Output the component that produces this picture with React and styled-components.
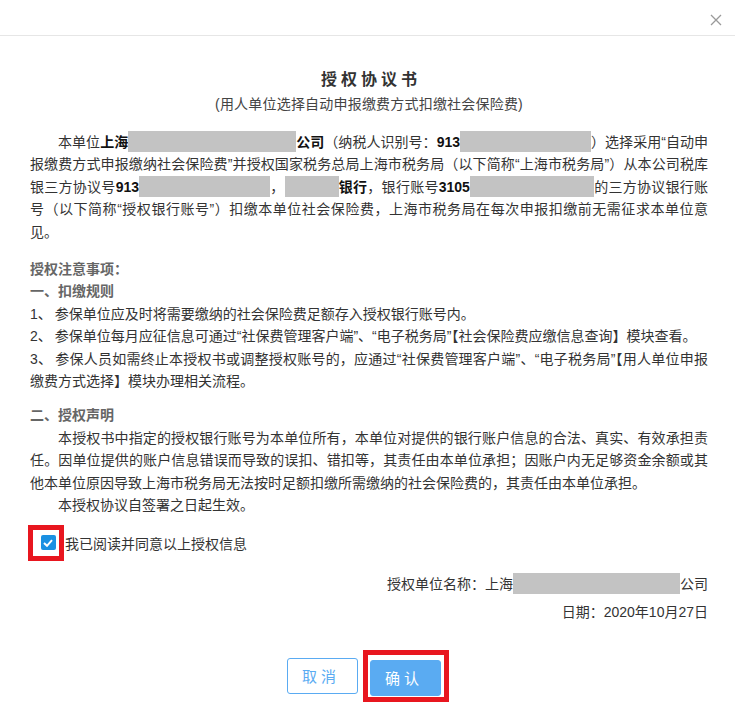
import React, { useState } from "react";
import styled, { createGlobalStyle } from "styled-components";

const GlobalStyle = createGlobalStyle`
  html, body {
    margin: 0;
    padding: 0;
    background: #fff;
  }
  body {
    font-family: "Liberation Sans", "Noto Sans CJK SC", sans-serif;
  }
`;

const Dialog = styled.div`
  width: 735px;
  height: 711px;
  background: #fff;
  display: flex;
  flex-direction: column;
  color: #333;
`;

const Header = styled.div`
  height: 36px;
  border-bottom: 1px solid #e6e6e6;
  display: flex;
  justify-content: flex-end;
  align-items: center;
  padding-right: 12px;
  box-sizing: border-box;
`;

const CloseButton = styled.button`
  border: none;
  background: none;
  padding: 0;
  width: 14px;
  height: 14px;
  display: flex;
  align-items: center;
  justify-content: center;
  cursor: pointer;
  margin-top: 4px;
`;

const Body = styled.div`
  padding: 32px 27px 0 30px;
  display: flex;
  flex-direction: column;
`;

const Title = styled.h1`
  margin: 0;
  font-size: 16px;
  font-weight: 700;
  letter-spacing: 4px;
  text-align: center;
  color: #333;
  line-height: 24px;
  padding-left: 4px;
`;

const Subtitle = styled.div`
  margin-top: 1px;
  font-size: 14px;
  text-align: center;
  color: #444;
  line-height: 22px;
  letter-spacing: 0.2px;
`;

const Paragraph = styled.p`
  margin: ${(p) => p.$mt || 0}px 0 0;
  font-size: 14px;
  line-height: 22.4px;
  text-align: justify;
  text-indent: ${(p) => (p.$indent ? "28px" : "0")};
  color: #333;
`;

const Strong = styled.b`
  color: #111;
  font-weight: 700;
`;

const Redact = styled.span`
  display: inline-block;
  width: ${(p) => p.$w}px;
  height: 21px;
  background: #c3c3c3;
  vertical-align: -5px;
  text-indent: 0;
`;

const ItemNo = styled.span`
  margin-right: 3px;
`;

const SectionTitle = styled.div`
  margin-top: ${(p) => p.$mt || 0}px;
  font-size: 14px;
  font-weight: 700;
  line-height: 22.4px;
  color: #666;
`;

const CheckRow = styled.label`
  margin-top: 14px;
  display: flex;
  align-items: center;
  height: 24px;
  font-size: 14px;
  color: #333;
  cursor: pointer;
`;

const CheckFrame = styled.span`
  margin-left: -2px;
  width: 36px;
  height: 36px;
  box-sizing: border-box;
  border: 5px solid #e8161f;
  display: flex;
  align-items: center;
  justify-content: center;
  padding-left: 4px;
  margin-right: 1px;
`;

const CheckBox = styled.span`
  width: 15px;
  height: 15px;
  border-radius: 2px;
  background: ${(p) => (p.$checked ? "#1a90e2" : "#fff")};
  border: ${(p) => (p.$checked ? "none" : "1px solid #ccc")};
  display: flex;
  align-items: center;
  justify-content: center;
`;

const SignBlock = styled.div`
  margin-top: 15px;
  display: flex;
  flex-direction: column;
  align-items: flex-end;
  font-size: 14px;
  color: #333;
`;

const SignLine = styled.div`
  line-height: 28px;
  height: 28px;
  display: flex;
  align-items: center;
`;

const Footer = styled.div`
  margin-top: 24px;
  display: flex;
  justify-content: center;
  align-items: center;
  gap: 5px;
  padding-right: 3px;
`;

const Button = styled.button`
  width: 71px;
  height: 36px;
  border-radius: 3px;
  font-size: 15px;
  letter-spacing: 4px;
  padding-left: 4px;
  font-family: "Liberation Sans", "Noto Sans CJK SC", sans-serif;
  cursor: pointer;
  border: 1px solid #5aabf2;
  background: ${(p) => (p.$primary ? "#5aabf2" : "#fff")};
  color: ${(p) => (p.$primary ? "#fff" : "#5aabf2")};
`;

const Highlight = styled.div`
  padding: 5px 3px 1px 2px;
  border: 5px solid #e8161f;
  display: flex;
`;

export default function App() {
  const [checked, setChecked] = useState(true);

  return (
    <>
      <GlobalStyle />
      <Dialog>
        <Header>
          <CloseButton aria-label="关闭">
            <svg width="12" height="12" viewBox="0 0 12 12">
              <path d="M1 1 L11 11 M11 1 L1 11" stroke="#9a9a9a" strokeWidth="1.3" />
            </svg>
          </CloseButton>
        </Header>
        <Body>
          <Title>授权协议书</Title>
          <Subtitle>(用人单位选择自动申报缴费方式扣缴社会保险费)</Subtitle>

          <Paragraph $indent $mt={16}>
            本单位<Strong>上海</Strong>
            <Redact $w={168} />
            <Strong>公司</Strong>（纳税人识别号：<Strong>913</Strong>
            <Redact $w={131} />）选择采用“自动申报缴费方式申报缴纳社会保险费”并授权国家税务总局上海市税务局（以下简称“上海市税务局”）从本公司税库银三方协议号
            <Strong>913</Strong>
            <Redact $w={131} />，<Redact $w={54} />
            <Strong>银行</Strong>，银行账号<Strong>3105</Strong>
            <Redact $w={124} />
            的三方协议银行账号（以下简称“授权银行账号”）扣缴本单位社会保险费，上海市税务局在每次申报扣缴前无需征求本单位意见。
          </Paragraph>

          <SectionTitle $mt={15}>授权注意事项：</SectionTitle>
          <SectionTitle>一、扣缴规则</SectionTitle>
          <Paragraph>
            <ItemNo>1、</ItemNo>参保单位应及时将需要缴纳的社会保险费足额存入授权银行账号内。
          </Paragraph>
          <Paragraph>
            <ItemNo>2、</ItemNo>参保单位每月应征信息可通过“社保费管理客户端”、“电子税务局”【社会保险费应缴信息查询】模块查看。
          </Paragraph>
          <Paragraph>
            <ItemNo>3、</ItemNo>参保人员如需终止本授权书或调整授权账号的，应通过“社保费管理客户端”、“电子税务局”【用人单位申报缴费方式选择】模块办理相关流程。
          </Paragraph>

          <SectionTitle $mt={12}>二、授权声明</SectionTitle>
          <Paragraph $indent>
            本授权书中指定的授权银行账号为本单位所有，本单位对提供的银行账户信息的合法、真实、有效承担责任。因单位提供的账户信息错误而导致的误扣、错扣等，其责任由本单位承担；因账户内无足够资金余额或其他本单位原因导致上海市税务局无法按时足额扣缴所需缴纳的社会保险费的，其责任由本单位承担。
          </Paragraph>
          <Paragraph $indent>本授权协议自签署之日起生效。</Paragraph>

          <CheckRow onClick={() => setChecked(!checked)}>
            <CheckFrame>
              <CheckBox $checked={checked}>
                {checked && (
                  <svg width="10" height="8" viewBox="0 0 10 8">
                    <path d="M1 4 L4 6.8 L9 1.2" fill="none" stroke="#fff" strokeWidth="2" />
                  </svg>
                )}
              </CheckBox>
            </CheckFrame>
            我已阅读并同意以上授权信息
          </CheckRow>

          <SignBlock>
            <SignLine>
              授权单位名称：上海<Redact $w={167} />公司
            </SignLine>
            <SignLine>日期：2020年10月27日</SignLine>
          </SignBlock>

          <Footer>
            <Button>取消</Button>
            <Highlight>
              <Button $primary>确认</Button>
            </Highlight>
          </Footer>
        </Body>
      </Dialog>
    </>
  );
}
